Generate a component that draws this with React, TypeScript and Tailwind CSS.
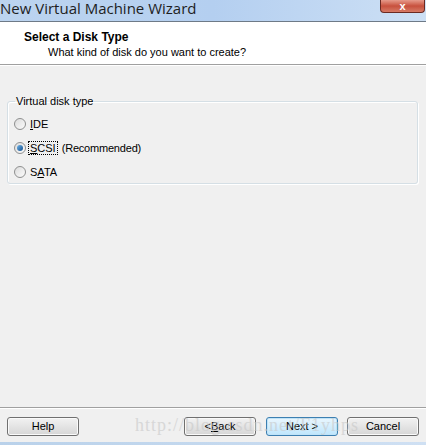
import React from "react";

const font = { fontFamily: '"Liberation Sans", Arial, sans-serif' };

function Radio({ checked }: { checked?: boolean }) {
  return (
    <span className="flex h-[12px] w-[12px] items-center justify-center rounded-full border border-[#8e8f8f] bg-gradient-to-br from-[#dcdcdc] to-[#fbfbfb]">
      {checked ? (
        <span className="h-[6px] w-[6px] rounded-full bg-gradient-to-br from-[#6fb3e6] to-[#0e4f8f]" />
      ) : null}
    </span>
  );
}

function WizButton({ children, primary }: { children: React.ReactNode; primary?: boolean }) {
  return (
    <button
      type="button"
      className={
        "flex h-[19px] w-[72px] items-center justify-center rounded-[3px] border text-[11px] text-black " +
        (primary
          ? "border-[#3c7fb1] bg-gradient-to-b from-[#eaf6fd] to-[#bee6fd] shadow-[inset_0_0_0_1px_#bfe3f8]"
          : "border-[#707070] bg-gradient-to-b from-[#f2f2f2] to-[#d6d6d6] shadow-[inset_0_0_0_1px_#fafafa]")
      }
    >
      {children}
    </button>
  );
}

export default function App() {
  return (
    <div className="relative flex h-[445px] w-[426px] flex-col overflow-hidden bg-[#f0f0f0]" style={font}>
      {/* title bar */}
      <div className="flex h-[21px] items-start bg-gradient-to-r from-[#bcd4ef] via-[#b4cff0] to-[#cde0f5]">
        <span
          className="mt-[-2px] text-[15px] leading-[20px] text-[#1e1e1e]"
          style={{ fontFamily: '"Open Sans", "Liberation Sans", sans-serif' }}
        >
          New Virtual Machine Wizard
        </span>
        <div className="ml-auto mr-[1px] flex h-[13px] w-[45px] items-center justify-center rounded-b-[4px] border border-t-0 border-[#6b2a22] bg-gradient-to-b from-[#e69a8b] via-[#c7503d] to-[#d67a66]">
          <span className="text-[11px] font-bold leading-[11px] text-white">x</span>
        </div>
      </div>

      {/* header */}
      <div className="flex h-[43px] flex-col border-t border-[#6e7a87] bg-white pl-[24px] pt-[8px]">
        <div className="text-[12px] font-bold leading-[14px] text-black">Select a Disk Type</div>
        <div className="mt-[2px] pl-[24px] text-[11px] leading-[13px] text-black">
          What kind of disk do you want to create?
        </div>
      </div>
      <div className="h-[1px] bg-[#a0a0a0]" />
      <div className="h-[1px] bg-white" />

      {/* body */}
      <div className="flex-1 px-[7px] pt-[29px]">
        <fieldset className="relative h-[89px] w-[411px] rounded-[3px] border border-[#d5dfe5] shadow-[inset_1px_1px_0_#fff,1px_1px_0_#fff] pl-[6px]">
          <legend className="ml-[1px] px-[1px] text-[11px] leading-[12px] text-black">Virtual disk type</legend>
          <div className="flex flex-col gap-[12px] pt-[11px] text-[11px] leading-[12px] text-black">
            <div className="flex h-[12px] items-center gap-[4px]">
              <Radio />
              <span>
                <u>I</u>DE
              </span>
            </div>
            <div className="flex h-[12px] items-center gap-[3px]">
              <Radio checked />
              <span className="px-[1px] outline-1 outline-dotted outline-black">
                <u>S</u>CSI
              </span>
              <span className="ml-[2px] tracking-[-0.2px]">(Recommended)</span>
            </div>
            <div className="flex h-[12px] items-center gap-[4px]">
              <Radio />
              <span>
                S<u>A</u>TA
              </span>
            </div>
          </div>
        </fieldset>
      </div>

      {/* footer */}
      <div className="h-[1px] bg-[#a0a0a0]" />
      <div className="h-[1px] bg-white" />
      <div className="flex h-[33px] items-start px-[7px] pt-[8px]">
        <WizButton>Help</WizButton>
        <div className="ml-auto flex gap-[9px]">
          <div className="mr-[1px]">
            <WizButton>
              &lt; <u>B</u>ack
            </WizButton>
          </div>
          <WizButton primary>Next &gt;</WizButton>
          <WizButton>Cancel</WizButton>
        </div>
      </div>
      <div className="h-[3px] bg-gradient-to-r from-[#b9d1ea] to-[#cfe0f3]" />

      {/* watermark */}
      <div
        className="pointer-events-none absolute left-[135px] top-[414px] text-[18px] leading-[22px] tracking-[1px] text-[#c8c8c8] opacity-60"
        style={{ fontFamily: '"Liberation Serif", serif' }}
      >
        http://blog.csdn.net/F1yhps
      </div>
    </div>
  );
}
